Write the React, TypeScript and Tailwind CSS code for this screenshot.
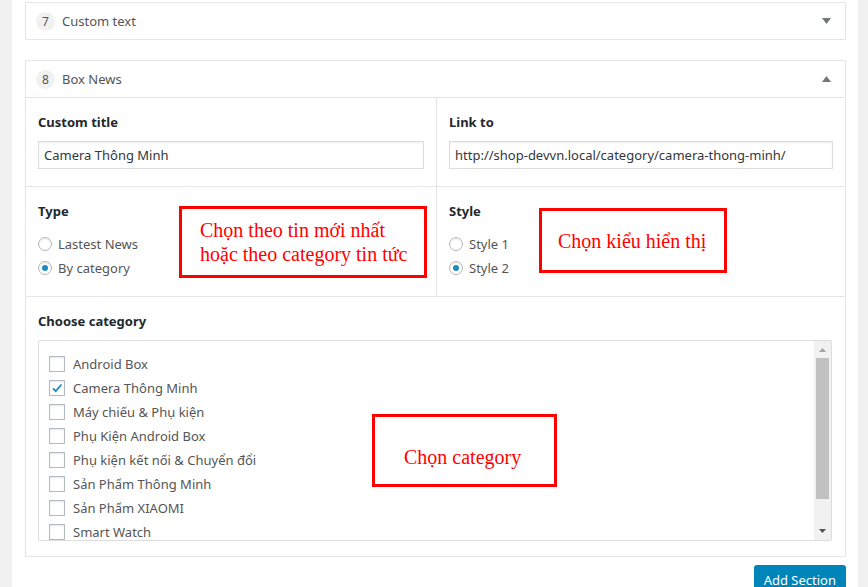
import type { ReactNode } from "react";

const categories: { name: string; checked?: boolean }[] = [
  { name: "Android Box" },
  { name: "Camera Thông Minh", checked: true },
  { name: "Máy chiếu & Phụ kiện" },
  { name: "Phụ Kiện Android Box" },
  { name: "Phụ kiện kết nối & Chuyển đổi" },
  { name: "Sản Phẩm Thông Minh" },
  { name: "Sản Phẩm XIAOMI" },
  { name: "Smart Watch" },
];

function Caret({ up }: { up?: boolean }) {
  return (
    <svg width="9" height="6" viewBox="0 0 9 6" className="block">
      {up ? (
        <path d="M0 6 L4.5 0 L9 6 Z" fill="#72777c" />
      ) : (
        <path d="M0 0 L9 0 L4.5 6 Z" fill="#72777c" />
      )}
    </svg>
  );
}

function PanelHeader({ num, title, open }: { num: number; title: string; open?: boolean }) {
  return (
    <div className="flex h-[36px] items-center pl-[10px] pr-[14px]">
      <span className="flex h-[19px] w-[19px] items-center justify-center rounded-full bg-[#f1f1f1] pt-[1px] text-[12px] text-[#555]">
        {num}
      </span>
      <span className="ml-[7px] pt-[2px] text-[13px] text-[#555]">{title}</span>
      <span className="ml-auto">
        <Caret up={open} />
      </span>
    </div>
  );
}

function Label({ children }: { children: ReactNode }) {
  return <div className="h-[18px] text-[13px] font-bold leading-[18px] text-[#23282d]">{children}</div>;
}

function TextInput({ value }: { value: string }) {
  return (
    <div className="mt-[10px] flex h-[28px] items-center border border-[#ddd] px-[5px] pt-[2px] text-[13px] text-[#32373c] shadow-[inset_0_1px_2px_rgba(0,0,0,0.07)]">
      {value}
    </div>
  );
}

function Radio({ label, checked }: { label: string; checked?: boolean }) {
  return (
    <div className="flex h-[24px] items-center">
      <span className="flex h-[14px] w-[14px] items-center justify-center rounded-full border border-[#b4b9be] bg-white shadow-[inset_0_1px_2px_rgba(0,0,0,0.1)]">
        {checked && <span className="h-[6px] w-[6px] rounded-full bg-[#1e8cbe]" />}
      </span>
      <span className="ml-[6px] pt-[2px] text-[13px] text-[#555]">{label}</span>
    </div>
  );
}

function Checkbox({ label, checked }: { label: string; checked?: boolean }) {
  return (
    <div className="flex h-[24px] shrink-0 items-center">
      <span className="flex h-[16px] w-[16px] items-center justify-center border border-[#b4b9be] bg-white shadow-[inset_0_1px_2px_rgba(0,0,0,0.1)]">
        {checked && (
          <svg width="12" height="12" viewBox="0 0 12 12">
            <path d="M2 6.5 L4.8 9.2 L10.5 2.5" fill="none" stroke="#1e8cbe" strokeWidth="1.8" />
          </svg>
        )}
      </span>
      <span className="ml-[8px] pt-[2px] text-[13px] text-[#555]">{label}</span>
    </div>
  );
}

function Note({ className, children }: { className: string; children: ReactNode }) {
  return (
    <div
      className={`absolute border-[3px] border-[#ff0000] bg-white text-[20px] leading-[24px] text-[#ff0000] ${className}`}
      style={{ fontFamily: '"Liberation Serif", "Times New Roman", serif' }}
    >
      {children}
    </div>
  );
}

export default function App() {
  return (
    <div
      className="flex min-h-[587px] w-[868px] bg-[#f1f1f1]"
      style={{ fontFamily: '"Noto Sans", "Open Sans", sans-serif' }}
    >
      <div className="w-[12px] shrink-0" />
      <div className="relative w-[846px] bg-white pl-[13px] pr-[12px] pt-[2px]">
        {/* Section 7 */}
        <div className="border border-[#e5e5e5]">
          <PanelHeader num={7} title="Custom text" />
        </div>

        {/* Section 8 */}
        <div className="mt-[20px] border border-[#e5e5e5]">
          <div className="border-b border-[#e5e5e5]">
            <PanelHeader num={8} title="Box News" open />
          </div>

          <div className="grid grid-cols-[411px_1fr] border-b border-[#e5e5e5]">
            <div className="border-r border-[#e5e5e5] pb-[17px] pl-[12px] pr-[12px] pt-[15px]">
              <Label>Custom title</Label>
              <TextInput value="Camera Thông Minh" />
            </div>
            <div className="pb-[17px] pl-[12px] pr-[12px] pt-[15px]">
              <Label>Link to</Label>
              <TextInput value="http://shop-devvn.local/category/camera-thong-minh/" />
            </div>
          </div>

          <div className="grid grid-cols-[411px_1fr] border-b border-[#e5e5e5]">
            <div className="border-r border-[#e5e5e5] pb-[16px] pl-[12px] pt-[15px]">
              <Label>Type</Label>
              <div className="mt-[12px]">
                <Radio label="Lastest News" />
                <Radio label="By category" checked />
              </div>
            </div>
            <div className="pb-[16px] pl-[12px] pt-[15px]">
              <Label>Style</Label>
              <div className="mt-[12px]">
                <Radio label="Style 1" />
                <Radio label="Style 2" checked />
              </div>
            </div>
          </div>

          <div className="pb-[15px] pl-[12px] pr-[13px] pt-[15px]">
            <Label>Choose category</Label>
            <div className="mt-[10px] flex h-[201px] overflow-hidden rounded-[2px] border border-[#ddd]">
              <div className="flex flex-1 flex-col overflow-hidden pl-[10px] pt-[11px]">
                {categories.map((c) => (
                  <Checkbox key={c.name} label={c.name} checked={c.checked} />
                ))}
              </div>
              <div className="flex w-[17px] flex-col items-center bg-[#f1f1f1]">
                <div className="flex h-[17px] items-center justify-center">
                  <svg width="7" height="4" viewBox="0 0 7 4">
                    <path d="M0 4 L3.5 0 L7 4 Z" fill="#a3a3a3" />
                  </svg>
                </div>
                <div className="h-[141px] w-[13px] bg-[#c1c1c1]" />
                <div className="flex flex-1 items-end justify-center pb-[7px]">
                  <svg width="7" height="4" viewBox="0 0 7 4">
                    <path d="M0 0 L7 0 L3.5 4 Z" fill="#505050" />
                  </svg>
                </div>
              </div>
            </div>
          </div>
        </div>

        <div className="mt-[8px] flex justify-end">
          <button className="h-[30px] rounded-[3px] bg-[#0085ba] px-[10px] pt-[2px] text-[13px] text-white">
            Add Section
          </button>
        </div>

        {/* Annotations */}
        <Note className="left-[167px] top-[206px] h-[72px] w-[248px] pl-[18px] pt-[9px]">
          <div>Chọn theo tin mới nhất</div>
          <div>hoặc theo category tin tức</div>
        </Note>
        <Note className="left-[527px] top-[208px] flex h-[65px] w-[188px] items-center pl-[16px]">
          Chọn kiểu hiển thị
        </Note>
        <Note className="left-[360px] top-[414px] flex h-[73px] w-[185px] items-center pl-[29px] pt-[12px]">
          Chọn category
        </Note>
      </div>
      <div className="w-[10px] shrink-0" />
    </div>
  );
}
